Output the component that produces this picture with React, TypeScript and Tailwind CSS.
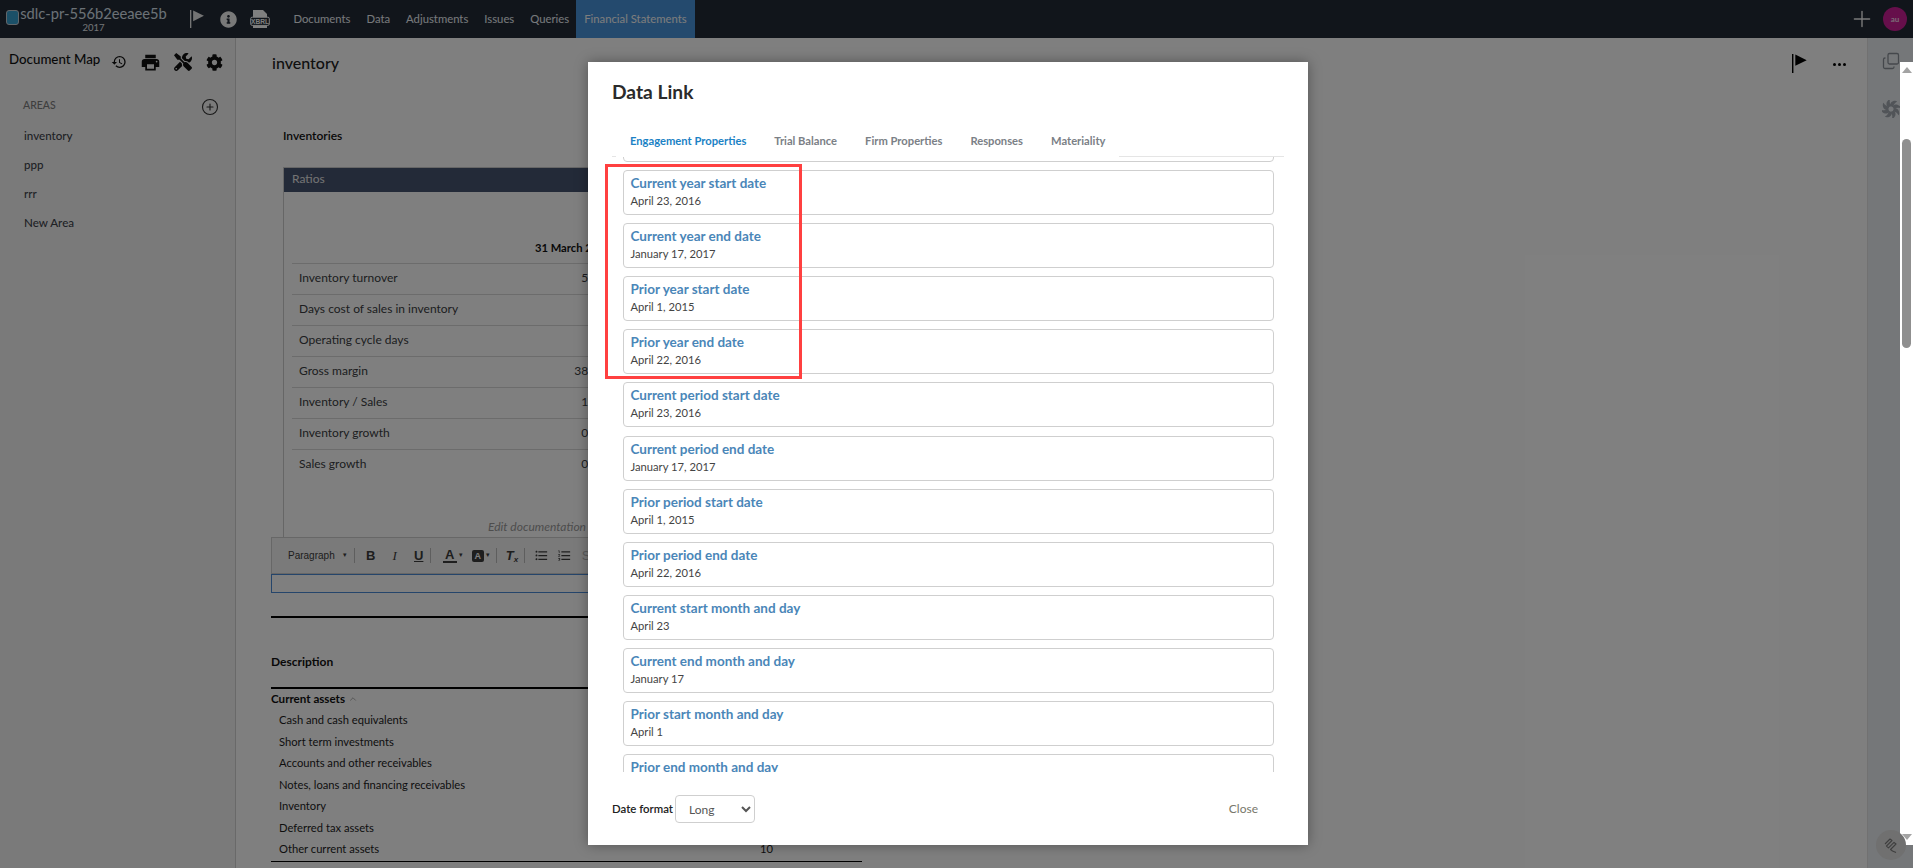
import React from "react";
import { FaInfoCircle, FaCog, FaTools } from "react-icons/fa";
import { MdFormatListBulleted, MdFormatListNumbered, MdHistory, MdPrint } from "react-icons/md";
import { ChevronUp, CirclePlus, Plus, Copy } from "lucide-react";

const Flag = ({ c, h = 19 }: { c: string; h?: number }) => (
  <svg width={h * 0.8} height={h} viewBox="0 0 16 20" fill={c}>
    <rect x="0" y="0" width="1.5" height="20" />
    <path d="M3.5 0.5 L15.5 6.5 L3.5 12.5 Z" />
  </svg>
);

const Xbrl = () => (
  <svg width="20" height="20" viewBox="0 0 20 20">
    <path d="M3 1h10l4 4v4H3zM3 16h14v3H3z" fill="#fff" />
    <rect x="0.7" y="8.2" width="18.6" height="8.2" rx="1.5" fill="#222a36" stroke="#fff" strokeWidth="1" />
    <text x="10" y="14.6" textAnchor="middle" fontSize="6.6" fontWeight="700" fill="#fff" fontFamily="Liberation Sans, sans-serif">XBRL</text>
  </svg>
);

const Swirl = () => (
  <svg width="18" height="18" viewBox="0 0 24 24" fill="none">
    {[0, 45, 90, 135, 180, 225, 270, 315].map((a) => (
      <path key={a} transform={`rotate(${a} 12 12)`} d="M10.5 7.8 C10.5 4.5 13 1 17.5 1 C18.8 1 19.5 1.4 20.2 2 C17.5 3.5 15.5 6 14.6 9.5 Z" fill="#a3a9b1" />
    ))}
  </svg>
);

const Spring = () => (
  <svg width="16" height="17" viewBox="0 0 16 17" fill="none" stroke="#3f3f3f" strokeWidth="1.1" strokeLinejoin="round">
    <path d="M2 7 L7 2 L9 3.5 L3.5 9 L5.5 10.8 L11 5.3 L13 7 L7.5 12.5 L9.5 14 L13 15.5" />
  </svg>
);

const Row = ({ label, value }: { label: string; value: string }) => (
  <div className="ml-[8px] w-[560px] h-[31px] border-t border-[#d9d9d9] pl-[7px] pb-[2px] flex items-center">
    <div className="w-[306px] flex justify-between text-[#3a3d42]">
      <span>{label}</span>
      <span>{value}</span>
    </div>
  </div>
);

const Sep = () => <span className="w-px h-[15px] bg-[#bdbdbd]" />;

const dates: [string, string][] = [
  ["Current year start date", "April 23, 2016"],
  ["Current year end date", "January 17, 2017"],
  ["Prior year start date", "April 1, 2015"],
  ["Prior year end date", "April 22, 2016"],
  ["Current period start date", "April 23, 2016"],
  ["Current period end date", "January 17, 2017"],
  ["Prior period start date", "April 1, 2015"],
  ["Prior period end date", "April 22, 2016"],
  ["Current start month and day", "April 23"],
  ["Current end month and day", "January 17"],
  ["Prior start month and day", "April 1"],
  ["Prior end month and day", "April 22"],
];

const Card = ({ title, sub }: { title: string; sub: string }) => (
  <div className="h-[45px] shrink-0 rounded-[4px] border border-[#cfcfcf] pl-[7px] pt-[4px] bg-white">
    <div className="text-[13.5px] leading-[16px] font-bold text-[#4a86b8]">{title}</div>
    <div className="text-[11.2px] leading-[14px] mt-[3px] text-[#444]">{sub}</div>
  </div>
);

export default function App() {
  const items = [
    ["Cash and cash equivalents", ""],
    ["Short term investments", ""],
    ["Accounts and other receivables", ""],
    ["Notes, loans and financing receivables", ""],
    ["Inventory", ""],
    ["Deferred tax assets", ""],
    ["Other current assets", "10"],
  ];
  return (
    <div className="relative w-[1913px] h-[868px] overflow-hidden bg-white text-[12px] [font-family:Lato,sans-serif] text-[#111]">
      {/* top bar */}
      <header className="h-[38px] bg-[#222a36] flex items-center text-[#eef2f7]">
        <div className="ml-[6px] w-[13px] h-[15px] rounded-[3px] border border-[#c5ccd3] bg-[#37a0d0] -mt-[3px] shrink-0" />
        <div className="ml-[3px] w-[143px] shrink-0 flex flex-col items-center">
          <div className="text-[14.7px] leading-[18px] whitespace-nowrap text-[#d8e2ec]">sdlc-pr-556b2eeaee5b</div>
          <div className="text-[9.5px] leading-[12px] text-[#e4e8ec]">2017</div>
        </div>
        <div className="ml-[25px]"><Flag c="#e8e8e8" h={18} /></div>
        <FaInfoCircle className="ml-[16px] text-[#f2f2f2]" size={17} />
        <div className="ml-[13px]"><Xbrl /></div>
        <nav className="ml-[23px] flex items-center h-full text-[11.3px]">
          <span>Documents</span>
          <span className="ml-[16px]">Data</span>
          <span className="ml-[16px]">Adjustments</span>
          <span className="ml-[16px]">Issues</span>
          <span className="ml-[16px]">Queries</span>
          <span className="ml-[7px] h-full px-[8px] flex items-center bg-[#4894dc] text-[#fafafa]">Financial Statements</span>
        </nav>
        <div className="ml-auto flex items-center">
          <Plus size={26} strokeWidth={1.3} className="text-[#f4f4f4]" />
          <div className="ml-[8px] mr-[6px] w-[24px] h-[24px] rounded-full bg-[#cc1e96] flex items-center justify-center text-[8px] font-bold text-[#f5d5ea]">au</div>
        </div>
      </header>

      <div className="flex h-[830px]">
        {/* sidebar */}
        <aside className="w-[236px] shrink-0 bg-[#f5f5f5] border-r border-[#d3d3d3]">
          <div className="flex items-center h-[24px] mt-[12px] pl-[9px]">
            <span className="text-[13.3px] leading-[20px] font-medium -mt-[6px]">Document Map</span>
            <MdHistory className="ml-[11px]" size={16} />
            <MdPrint className="ml-[13px]" size={21} />
            <FaTools className="ml-[13px]" size={18} />
            <FaCog className="ml-[14px]" size={17} />
          </div>
          <div className="flex items-center justify-between mt-[22px] h-[20px] pl-[23px] pr-[16px]">
            <span className="text-[10.5px] text-[#7d7d7d] font-medium">AREAS</span>
            <CirclePlus size={18} strokeWidth={1.5} className="text-[#333] mt-[2px]" />
          </div>
          <div className="mt-[10px] pl-[24px] font-medium text-[11.6px] text-[#3f444b]">
            <div className="h-[29px] leading-[20px]">inventory</div>
            <div className="h-[29px] leading-[20px]">ppp</div>
            <div className="h-[29px] leading-[20px]">rrr</div>
            <div className="h-[29px] leading-[20px]">New Area</div>
          </div>
        </aside>

        {/* main document */}
        <main className="flex-1 pl-[35px] min-w-0">
          <div className="flex items-center justify-between mt-[13px] h-[24px] pr-[21px] pl-[1px]">
            <span className="text-[16px] font-medium text-[#222]">inventory</span>
            <div className="flex items-center gap-[26px]">
              <Flag c="#000" h={19} />
              <div className="flex gap-[2px] mt-[3px]">
                <i className="w-[3px] h-[3px] rounded-full bg-black" />
                <i className="w-[3px] h-[3px] rounded-full bg-black" />
                <i className="w-[3px] h-[3px] rounded-full bg-black" />
              </div>
            </div>
          </div>

          <div className="ml-[12px] mt-[52px] leading-[18px] font-semibold">Inventories</div>

          <section className="ml-[12px] mt-[22px] w-[580px] h-[370px] border-t border-l border-[#cccccc]">
            <div className="h-[24px] bg-[#465470] flex items-center pl-[8px] pb-[2px] text-[#e8e8e8]">Ratios</div>
            <div className="h-[71px] pl-[251px] pt-[48px] leading-[16px] font-bold text-[11.2px]">31 March 2017</div>
            <Row label="Inventory turnover" value="5.59" />
            <Row label="Days cost of sales in inventory" value="" />
            <Row label="Operating cycle days" value="" />
            <Row label="Gross margin" value="38.12" />
            <Row label="Inventory / Sales" value="1.23" />
            <Row label="Inventory growth" value="0.12" />
            <Row label="Sales growth" value="0.12" />
            <div className="ml-[8px] w-[560px] border-t border-transparent h-[56px] pt-[38px] pl-[196px] leading-[16px] italic text-[#9a9a9a]">Edit documentation</div>
          </section>

          {/* editor toolbar */}
          <div className="w-[640px] h-[37px] border border-[#cfcfcf] bg-[#f4f4f4] flex items-center [font-family:'Liberation_Sans',sans-serif] text-[#3c3c3c]">
            <span className="ml-[16px] text-[10px]">Paragraph</span>
            <span className="ml-[8px] mr-[7px] text-[7px]">▾</span>
            <Sep />
            <span className="ml-[9px] w-[14px] text-[13px] font-bold text-center">B</span>
            <span className="ml-[10px] w-[14px] text-[13px] italic font-[serif] text-center">I</span>
            <span className="ml-[11px] mr-[5px] w-[12px] text-[13px] font-bold underline text-center">U</span>
            <Sep />
            <span className="ml-[12px] w-[14px] text-[13px] font-bold border-b-2 border-[#3c3c3c] leading-[13px] text-center">A</span>
            <span className="ml-[2px] text-[7px]">▾</span>
            <span className="ml-[9px] w-[12px] h-[12px] rounded-[2px] bg-[#3c3c3c] text-white text-[9px] font-bold leading-[12px] text-center">A</span>
            <span className="ml-[2px] mr-[6px] text-[7px]">▾</span>
            <Sep />
            <span className="ml-[9px] w-[14px] text-[13px] font-bold italic">T<sub className="text-[8px]">x</sub></span>
            <span className="w-[4px]" />
            <Sep />
            <MdFormatListBulleted className="ml-[9px]" size={15} />
            <MdFormatListNumbered className="ml-[8px]" size={15} />
            <span className="ml-[10px] text-[13px] text-[#b5b5b5]">S</span>
          </div>
          <div className="w-[640px] h-[19px] border border-[#4a8bd6]" />

          <div className="w-[640px] mt-[23px] border-t-2 border-black" />
          <div className="h-[69px] pt-[36px] leading-[16px] font-bold">Description</div>
          <div className="w-[640px] border-t-2 border-black" />
          <div className="h-[20px] pb-[1px] flex items-center font-bold text-[11.6px]">
            Current assets
            <ChevronUp size={10} className="ml-[3px] text-[#a0a0a0]" />
          </div>
          <div className="w-[591px] border-b border-black text-[11.2px] pt-[1px]">
            {items.map(([a, b]) => (
              <div key={a} className="h-[21.5px] flex items-center justify-between pl-[8px] pr-[89px] text-[#1d1d1d]">
                <span>{a}</span>
                <span>{b}</span>
              </div>
            ))}
          </div>
        </main>

        {/* right rail */}
        <aside className="w-[46px] shrink-0 bg-[#eaeef2] border-l border-[#e2e2e2] flex flex-col items-start pl-[14px]">
          <Copy size={18} strokeWidth={1.7} className="mt-[14px] -scale-y-100 text-[#8a9098]" />
          <div className="mt-[30px]"><Swirl /></div>
        </aside>
      </div>

      {/* modal backdrop */}
      <div className="absolute inset-0 bg-black/50">
        <div className="ml-[588px] mt-[62px] w-[720px] h-[783px] bg-white flex flex-col shadow-[0_0_12px_rgba(0,0,0,0.35)]">
          <h2 className="ml-[24px] mt-[18px] text-[19.2px] leading-[24px] font-bold text-[#2b2b2b]">Data Link</h2>
          <div className="mt-[21px] mx-[24px] flex h-[32px] shrink-0 text-[11.2px] font-bold text-[#7b8086]">
            <span className="w-[4px] border-b border-[#e5e5e5]" />
            <span className="px-[14px] flex items-center text-[#1b82c5]">Engagement Properties</span>
            <span className="px-[14px] flex items-center">Trial Balance</span>
            <span className="px-[14px] flex items-center">Firm Properties</span>
            <span className="px-[14px] flex items-center">Responses</span>
            <span className="px-[14px] flex items-center">Materiality</span>
            <span className="flex-1 border-b border-[#e5e5e5]" />
          </div>
          <div className="h-[615px] shrink-0 overflow-hidden ml-[34.5px] mr-[34px]">
            <div className="-mt-[40px] flex flex-col gap-[8.1px]">
              <div className="h-[45px] shrink-0 rounded-[4px] border border-[#cfcfcf]" />
              {dates.map(([t, s]) => (
                <Card key={t} title={t} sub={s} />
              ))}
            </div>
          </div>
          <div className="mt-[23px] mx-[24px] flex items-center justify-between h-[28px]">
            <div className="flex items-center">
              <label className="font-semibold text-[11.4px] text-[#222]">Date format</label>
              <select defaultValue="Long" className="ml-[2px] w-[80px] h-[28px] pl-[9px] rounded-[4px] border border-[#cfcfcf] bg-white text-[#555] text-[12px]">
                <option>Long</option>
                <option>Short</option>
              </select>
            </div>
            <span className="mr-[26px] text-[#77776a]">Close</span>
          </div>
        </div>
      </div>

      {/* red annotation */}
      <div className="absolute left-[605px] top-[164px] w-[197px] h-[215px] border-[3px] border-[#ff4040]" />

      {/* scrollbar */}
      <div className="absolute right-0 top-[62px] bottom-[23px] w-[13px] bg-white flex flex-col items-center">
        <div className="mt-[5px] w-0 h-0 border-x-[5px] border-x-transparent border-b-[6px] border-b-[#a3a3a3]" />
        <div className="mt-[66px] w-[9px] h-[209px] rounded-full bg-[#8f8f8f]" />
      </div>

      {/* floating pin button */}
      <div className="absolute left-[1876px] top-[830px] w-[30px] h-[30px] rounded-full bg-[#707070] flex items-center justify-center">
        <Spring />
      </div>
      <div className="absolute right-0 top-[825px] w-[7px] h-[20px] bg-white" />
      <div className="absolute right-[1px] top-[834px] w-0 h-0 border-x-[5px] border-x-transparent border-t-[6px] border-t-[#a3a3a3]" />
    </div>
  );
}
